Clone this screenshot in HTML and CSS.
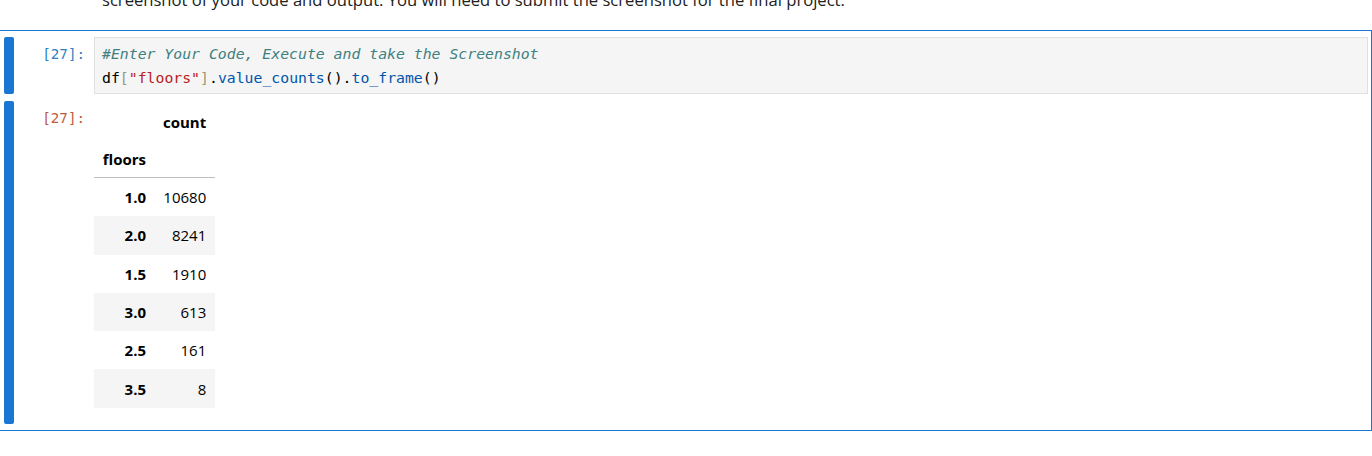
FILE: index.html
```html
<!DOCTYPE html>
<html lang="en">
<head>
<meta charset="utf-8">
<title>Notebook cell</title>
<link rel="stylesheet" href="styles.css">
</head>
<body>
<div class="notebook">
  <p class="md-text">screenshot of your code and output. You will need to submit the screenshot for the final project.</p>

  <div class="cell">
    <div class="cell-row input-row">
      <div class="collapser"></div>
      <div class="prompt in-prompt">[27]:</div>
      <div class="editor">
        <div class="code-line"><span class="tok-comment">#Enter Your Code, Execute and take the Screenshot</span></div>
        <div class="code-line"><span class="tok-var">df</span><span class="tok-bracket">[</span><span class="tok-string">"floors"</span><span class="tok-bracket">]</span><span class="tok-var">.</span><span class="tok-prop">value_counts</span><span class="tok-var">().</span><span class="tok-prop">to_frame</span><span class="tok-var">()</span></div>
      </div>
    </div>

    <div class="cell-row output-row">
      <div class="collapser out-collapser"></div>
      <div class="prompt out-prompt">[27]:</div>
      <div class="output">
        <table class="dataframe">
          <thead>
            <tr><th class="col-idx"></th><th class="col-val">count</th></tr>
            <tr class="name-row"><th class="col-idx">floors</th><th class="col-val"></th></tr>
          </thead>
          <tbody>
            <tr><th>1.0</th><td>10680</td></tr>
            <tr><th>2.0</th><td>8241</td></tr>
            <tr><th>1.5</th><td>1910</td></tr>
            <tr><th>3.0</th><td>613</td></tr>
            <tr><th>2.5</th><td>161</td></tr>
            <tr><th>3.5</th><td>8</td></tr>
          </tbody>
        </table>
      </div>
    </div>
  </div>
</div>
</body>
</html>
```

FILE: styles.css
```css
html, body {
  margin: 0;
  padding: 0;
  background: #ffffff;
}

body {
  font-family: "Open Sans", "Noto Sans", sans-serif;
  color: #212121;
  overflow: hidden;
}

.notebook {
  display: flex;
  flex-direction: column;
}

.md-text {
  margin: -12px 0 0 102px;
  height: 42px;
  font-size: 16.6px;
  line-height: 24px;
  color: #212121;
  white-space: nowrap;
}

.cell {
  margin-left: -1px;
  width: 1371px;
  border: 1px solid #1976d2;
  padding: 6px 0 6px 0;
  display: flex;
  flex-direction: column;
  gap: 7px;
}

.cell-row {
  display: flex;
  align-items: stretch;
}

.collapser {
  flex: 0 0 10px;
  margin-left: 4px;
  background: #1976d2;
  border-radius: 2px;
}

.prompt {
  flex: 0 0 71px;
  padding-right: 9px;
  text-align: right;
  font-family: "DejaVu Sans Mono", "Liberation Mono", monospace;
  font-size: 14.2px;
  line-height: 24px;
}

.in-prompt {
  color: #307fc1;
  padding-top: 5px;
}

.out-prompt {
  color: #bf5b3d;
  padding-top: 5px;
}

.editor {
  flex: 1 1 auto;
  margin-right: 3px;
  background: #f5f5f5;
  border: 1px solid #e0e0e0;
  padding: 4px 0 3px 7px;
  font-family: "DejaVu Sans Mono", "Liberation Mono", monospace;
  font-size: 14.8px;
  line-height: 24px;
  color: #000000;
}

.code-line {
  white-space: pre;
  height: 24px;
}

.tok-comment {
  color: #408080;
  font-style: italic;
}

.tok-var {
  color: #000000;
}

.tok-bracket {
  color: #999977;
}

.tok-string {
  color: #ba2121;
}

.tok-prop {
  color: #0055aa;
}

.output {
  flex: 1 1 auto;
  padding: 2px 0 16px 0;
}

.dataframe {
  border-collapse: collapse;
  border-spacing: 0;
  font-size: 15px;
  color: #000000;
}

.dataframe th,
.dataframe td {
  height: 37px;
  padding: 0 9px 0 7px;
  text-align: right;
  vertical-align: middle;
  line-height: 20px;
}

.dataframe th {
  font-weight: 700;
}

.dataframe td {
  font-weight: 400;
}

.dataframe .col-idx {
  width: 44px;
  padding-right: 10px;
  padding-left: 8px;
}

.dataframe .col-val {
  width: 43px;
}

.dataframe thead tr.name-row th {
  border-bottom: 1px solid #bdbdbd;
}

.dataframe tbody th,
.dataframe tbody td {
  height: 38.3px;
}

.dataframe tbody th {
  padding-right: 10px;
}

.dataframe tbody tr:nth-child(even) {
  background: #f5f5f5;
}
```
